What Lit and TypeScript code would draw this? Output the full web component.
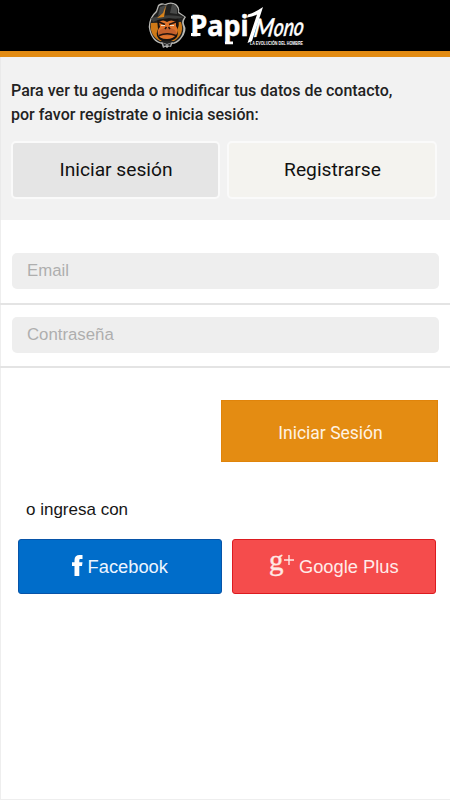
import { LitElement, html, css, svg } from "lit";
import { customElement } from "lit/decorators.js";

@customElement("brand-logo")
class BrandLogo extends LitElement {
  static styles = css`
    :host { display: block; height: 51px; }
    svg { display: block; }
    .slab { font: bold 28px "Noto Sans", sans-serif; }
    .script { font: italic 500 25px Lato, sans-serif; }
    .tag { font: bold 5.4px "Liberation Sans", sans-serif; }
  `;

  private mascot() {
    return svg`
      <path d="M148.7 27 Q149 17 156 11 L158 5 Q161 2 165 4 Q171 1 176 4 Q180 7 179 12 L186 17 Q183 21 184 24 Q188 31 181 39 Q177 44 172 44 L167 48 L162 44 Q151 42 148.7 27Z" fill="#b9b9b5"/>
      <path d="M150 27 Q150 18 157 12 L159 6 Q162 3.500 166 5 Q171 2.500 175 5 Q179 8 178 13 L184.500 17 Q181 21 182.500 25 Q185 31 180 38 Q176 42.500 171 43 L167 46 L163 43 Q152 41 150 27Z" fill="#20201f"/>
      <path d="M151 23 Q149 35 160 41 L174 41 Q185 34 181 22Z" fill="#ce7917"/>
      <path d="M157 19 L178 18 Q180 25 177 30 Q180 38 171 41 L162 41 Q154 37 158 29Z" fill="#171311"/>
      <path d="M159 22 Q163 19 167 22 Q171 19 176 22 L176 26 Q179 30 176 35 Q173 39 167 39 Q159 39 158 34 Q157 30 160 27Z" fill="#e0732a"/>
      <path d="M160 30 Q167 25 175 30 L177 34 Q168 37 158 34Z" fill="#c4602c"/>
      <path d="M159 22 L165 24.500 M176 22 L169 24.500 M165 29 L166.500 27 M170 29 L168.500 27 M159 35.500 Q167 32 176 35.500" fill="none" stroke="#24130e" stroke-width="1.500"/>
      <path d="M161 25.500 h4 M170 25.500 h4" stroke="#eee1c9" stroke-width="1.200"/>
      <path d="M151 18 Q166 13 184 17 Q178 20 169 18 Q158 19 153 22Z" fill="#3d3e3d"/>
      <path d="M160 7 Q165 5 167 5 L164 14 L158 16Z M172 4 Q177 5 177 10 L177 14 L170 13Z" fill="#484948"/>
      <path d="M163 13 L166 5 L164 17 L157 18Z" fill="#d8831b"/>
      <path d="M161 42 L167 44 L173 42 L171 47 L167 46 L163 48Z" fill="#aaa"/>
      <path d="M163 43 L167 45 L171 43 L170 46 L167 45 L164 46Z" fill="#222"/>`;
  }

  render() {
    return html`<svg width="450" height="51" viewBox="0 0 450 51">
      ${this.mascot()}
      <g fill="#fff">
        <text class="slab" x="190.500" y="36" textLength="58" lengthAdjust="spacingAndGlyphs" stroke="#fff" stroke-width=".5">Papi</text>
        <path d="M191 15.800h4v3h-4z M191 33h9.500v3h-9.500z M225 41.500h8v2.800h-8z"/>
        <path d="M248 14.500 Q255 12.500 263 7 L252 41 L247.500 43 L257 14.500 Q253 16.500 247 17.500Z"/>
        <g transform="translate(253 37) rotate(-2) skewX(-10)">
          <text class="script" x="0" y="0" textLength="20" lengthAdjust="spacingAndGlyphs" stroke="#fff" stroke-width=".4">M</text>
          <text class="script" x="20" y="0" textLength="30" lengthAdjust="spacingAndGlyphs" stroke="#fff" stroke-width=".4">ono</text>
        </g>
        <text class="tag" x="250" y="45" textLength="53" lengthAdjust="spacingAndGlyphs">LA EVOLUCIÓN DEL HOMBRE</text>
      </g>
    </svg>`;
  }
}

@customElement("app-root")
class AppRoot extends LitElement {
  static styles = css`
    :host {
      display: block; box-sizing: border-box; width: 450px; height: 800px;
      background: #fff; color: #161616; overflow: hidden;
      font-family: "Liberation Sans", sans-serif;
      box-shadow: inset 1px 0 #eee, inset 0 -1px #eee;
    }
    * { box-sizing: border-box; }
    button { font: inherit; padding: 0; margin: 0; border: 0; display: flex; align-items: center; justify-content: center; white-space: nowrap; }
    header { background: #000; height: 57px; border-bottom: 6px solid #e28b13; }
    .intro { height: 163px; padding: 22px 13px 0 10px; background: #f2f2f2; border-left: 1px solid #eaeaea; }
    .intro p { margin: 0; font: 500 16px/24px Roboto, sans-serif; color: #222; white-space: nowrap; }
    .tabs { display: grid; grid-template-columns: 209px 210px; gap: 7px; margin-top: 14px; }
    .tab { height: 58px; border: 2px solid #fafafa; border-radius: 5px; background: #f4f3ef; font: 400 19.2px Roboto, sans-serif; color: #111; padding: 0 0 2px 1px; }
    .tab.active { background: #e5e5e5; }
    .fields { padding-top: 33px; }
    .row { padding: 0 11px 0 12px; }
    .first { height: 50px; }
    .second { height: 61px; padding-top: 12px; }
    .rule { height: 2px; background: #e4e4e4; }
    input { display: block; width: 427px; height: 36px; border: 0; border-radius: 5px; background: #eee; padding: 0 15px 1px; font: 16.8px "Liberation Sans", sans-serif; outline: 0; }
    input::placeholder { color: #aeaeae; opacity: 1; }
    .submit { width: 217px; height: 62px; margin: 32px 12px 0 auto; background: #e48c12; color: #fff3e3; font: 17.5px Roboto, sans-serif; border: 1px solid #e0840a; padding: 4px 0 0 2px; }
    .or { margin: 38px 0 0 26px; font-size: 17px; line-height: 20px; white-space: nowrap; }
    .social { display: grid; grid-template-columns: 203.5px 203.5px; gap: 10.5px; margin: 19px 0 0 18px; }
    .social button { height: 55px; border-radius: 3px; font-size: 18.3px; line-height: 21px; color: #eef5ff; }
    .facebook { background: #006dca; border: 1px solid #0754a8; }
    .social .google { background: #f54c4c; border: 1px solid #dc1b20; color: #ffebe9; }
    .facebook svg { margin: 0 5px 2px 0; }
    .google svg { margin: 0 5px 6px 0; }
    .g { font: 29px "Liberation Serif", serif; }
  `;

  render() {
    return html`
      <header><brand-logo></brand-logo></header>
      <section class="intro">
        <p>Para ver tu agenda o modificar tus datos de contacto,<br>por favor regístrate o inicia sesión:</p>
        <div class="tabs">
          <button class="tab active">Iniciar sesión</button>
          <button class="tab">Registrarse</button>
        </div>
      </section>
      <section class="fields">
        <div class="row first"><input type="email" placeholder="Email"></div>
        <div class="rule"></div>
        <div class="row second"><input type="password" placeholder="Contraseña"></div>
        <div class="rule"></div>
      </section>
      <button class="submit">Iniciar Sesión</button>
      <p class="or">o ingresa con</p>
      <div class="social">
        <button class="facebook">
          <svg width="11" height="22" viewBox="0 0 11 22"><path d="M2.500 21V11H0V7.200h2.500V5C2.500 1.800 4.500 0 7.500 0H10.500V4H8.800C7.700 4 7.300 4.500 7.300 5.300V7.200H10.500L10 11H7.300V21Z" fill="#fff"/></svg>
          <span>Facebook</span>
        </button>
        <button class="google">
          <svg width="25" height="41" viewBox="0 -11 25 41" fill="#ffe8e5" stroke="#ffe8e5">
            <text class="g" x="0" y="16" stroke-width=".4">g</text>
            <path d="M20 1V11M15 6H25" stroke-width="1.400"/>
          </svg>
          <span>Google Plus</span>
        </button>
      </div>`;
  }
}
